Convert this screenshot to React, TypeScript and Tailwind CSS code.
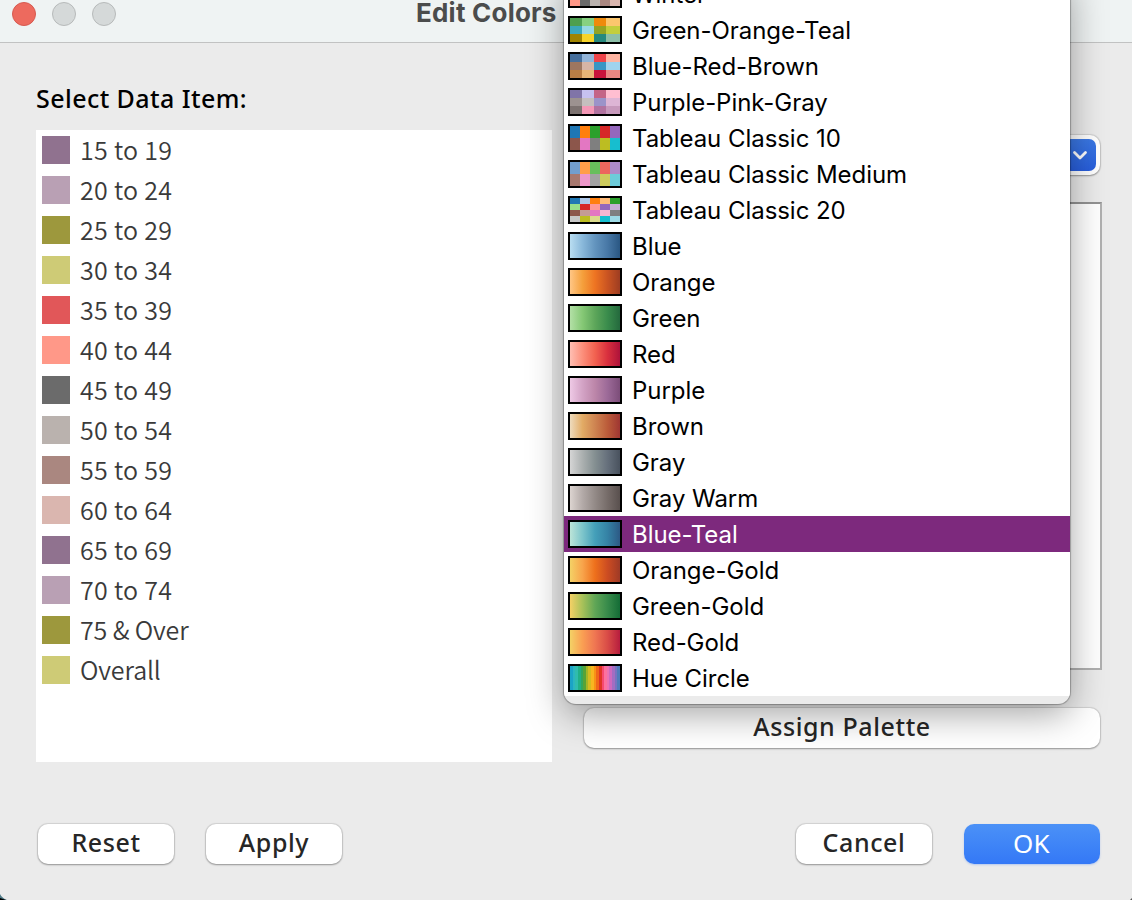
import React from "react";

type Entry = { label: string; cells?: string[]; cols?: string; ramp?: string[]; selected?: boolean };

const FIVE = "grid-cols-[10px_10px_10px_10px_10px]";
const FOUR = "grid-cols-[12px_12px_12px_14px]";

const WINTER = ["#90728f", "#b9a0b4", "#9d983d", "#cecb76", "#e15759", "#ff9888", "#6b6b6b", "#bab2ae", "#aa8780", "#dab6af"];

const ENTRIES: Entry[] = [
  { label: "Winter", cols: FIVE, cells: WINTER },
  {
    label: "Green-Orange-Teal",
    cols: FOUR,
    cells: ["#4e9f50", "#87d180", "#ef8a0c", "#fcc66d", "#3ca8bc", "#98d9e4", "#94a323", "#c3ce3d", "#a08400", "#f7d42a", "#26897e", "#8dbfa8"],
  },
  {
    label: "Blue-Red-Brown",
    cols: FOUR,
    cells: ["#466f9d", "#91b3d7", "#ed444a", "#feb5a2", "#9d7660", "#d7b5a6", "#3896c4", "#a0d4ee", "#ba7e45", "#e8b577", "#c8133b", "#ea8783"],
  },
  {
    label: "Purple-Pink-Gray",
    cols: FOUR,
    cells: ["#8074a8", "#c6c1f0", "#c46487", "#ffbed1", "#9c9290", "#c5bfbe", "#9b93c9", "#ddb5d5", "#7c7270", "#f498b6", "#b173a0", "#c799bc"],
  },
  {
    label: "Tableau Classic 10",
    cols: FIVE,
    cells: ["#1f77b4", "#ff7f0e", "#2ca02c", "#d62728", "#9467bd", "#8c564b", "#e377c2", "#7f7f7f", "#bcbd22", "#17becf"],
  },
  {
    label: "Tableau Classic Medium",
    cols: FIVE,
    cells: ["#729ece", "#ff9e4a", "#67bf5c", "#ed665d", "#ad8bc9", "#a8786e", "#ed97ca", "#a2a2a2", "#cdcc5d", "#6dccda"],
  },
  {
    label: "Tableau Classic 20",
    cols: FIVE,
    cells: [
      "#1f77b4", "#aec7e8", "#ff7f0e", "#ffbb78", "#2ca02c", "#98df8a", "#d62728", "#ff9896", "#9467bd", "#c5b0d5",
      "#8c564b", "#c49c94", "#e377c2", "#f7b6d2", "#7f7f7f", "#c7c7c7", "#bcbd22", "#dbdb8d", "#17becf", "#9edae5",
    ],
  },
  { label: "Blue", ramp: ["#b9ddf1", "#89b8da", "#6394be", "#4878a6", "#2a5783"] },
  { label: "Orange", ramp: ["#ffc685", "#f5a03c", "#ee7422", "#ca5422", "#9e3d22"] },
  { label: "Green", ramp: ["#b3e0a6", "#85c875", "#5da65a", "#3a8c4c", "#24693d"] },
  { label: "Red", ramp: ["#ffbeb2", "#fc8f7b", "#f26250", "#d9303e", "#ae123a"] },
  { label: "Purple", ramp: ["#eec9e5", "#d3a3c5", "#bc86a9", "#9c6a98", "#7c4d79"] },
  { label: "Brown", ramp: ["#eedbbd", "#e2ab65", "#ce8451", "#bb5c3a", "#9f3632"] },
  { label: "Gray", ramp: ["#d5d5d5", "#abb0b0", "#848f91", "#66707c", "#49525e"] },
  { label: "Gray Warm", ramp: ["#dcd4d0", "#b3aaa8", "#938a87", "#766c69", "#59504e"] },
  { label: "Blue-Teal", selected: true, ramp: ["#bce4d8", "#7dc5cb", "#449fb9", "#3582a5", "#2c5985"] },
  { label: "Orange-Gold", ramp: ["#f4d166", "#f8a44b", "#ee701c", "#cc4c22", "#9e3a26"] },
  { label: "Green-Gold", ramp: ["#f4d166", "#a7c159", "#60a656", "#388b4b", "#146c36"] },
  { label: "Red-Gold", ramp: ["#f4d166", "#fa9f53", "#ef7652", "#d94c47", "#b71d3e"] },
];

const HUES = [
  "#1ba3c6", "#2cb5c0", "#30bcad", "#21b087", "#33a65c", "#57a337", "#a2b627", "#d5bb21", "#f8b620",
  "#f89217", "#f06719", "#e03426", "#f64971", "#fc719e", "#eb73b3", "#ce69be", "#a26dc2", "#7873c0", "#4f7cba",
];

const ITEMS = ["15 to 19", "20 to 24", "25 to 29", "30 to 34", "35 to 39", "40 to 44", "45 to 49", "50 to 54", "55 to 59", "60 to 64", "65 to 69", "70 to 74", "75 & Over", "Overall"];

function Swatch({ entry }: { entry: Entry }) {
  if (entry.cells) {
    return (
      <div className={`grid h-7 w-[54px] shrink-0 auto-rows-fr border-2 border-black ${entry.cols}`}>
        {entry.cells.map((c, i) => (
          <span key={i} style={{ backgroundColor: c }} />
        ))}
      </div>
    );
  }
  return (
    <div
      className="h-7 w-[54px] shrink-0 border-2 border-black bg-origin-content"
      style={{ backgroundImage: `linear-gradient(to right, ${entry.ramp!.join(", ")})` }}
    />
  );
}

function PaletteMenu() {
  return (
    <div className="absolute top-[-24px] left-[564px] w-[506px] overflow-hidden rounded-b-[12px] bg-[#ebebeb] pb-2 font-['Inter',sans-serif] text-[24px] tracking-[-0.05px] shadow-[0_0_1px_1px_rgba(0,0,0,0.27),0_10px_36px_rgba(0,0,0,0.36)]">
      {ENTRIES.map((e) => (
        <div key={e.label} className={`flex h-9 items-center gap-2.5 pl-1 ${e.selected ? "bg-[#7d297d] text-white" : "bg-white text-black"}`}>
          <Swatch entry={e} />
          <span className="pt-0.5 leading-9 whitespace-nowrap">{e.label}</span>
        </div>
      ))}
      <div className="flex h-9 items-center gap-2.5 bg-white pl-1 text-black">
        <div className="flex h-7 w-[54px] shrink-0 border-2 border-black">
          {HUES.map((c) => (
            <span key={c} className="flex-1" style={{ backgroundColor: c }} />
          ))}
        </div>
        <span className="pt-0.5 leading-9">Hue Circle</span>
      </div>
    </div>
  );
}

function PushButton({ label, className = "" }: { label: string; className?: string }) {
  return (
    <button
      className={`flex h-10 items-center justify-center rounded-[10px] bg-white pb-0.5 text-[25px] font-medium tracking-[0.6px] text-[#262626] shadow-[0_0_1px_1px_rgba(0,0,0,0.1),0_1px_2px_rgba(0,0,0,0.3)] ${className}`}
    >
      {label}
    </button>
  );
}

export default function App() {
  return (
    <div className="relative flex h-[900px] w-[1132px] flex-col overflow-hidden bg-[#ebebeb] font-['Noto_Sans',sans-serif]">
      <header className="flex h-[43px] shrink-0 border-b border-[#c1c2c2] bg-[#eff3f3] pl-3">
        <div className="flex gap-4 pt-0.5">
          <span className="size-6 rounded-full border border-[#d65a50] bg-[#ed6a5e]" />
          <span className="size-6 rounded-full border border-[#b7baba] bg-[#d5d9d9]" />
          <span className="size-6 rounded-full border border-[#b7baba] bg-[#d5d9d9]" />
        </div>
        <h1 className="ml-[300px] font-['Inter',sans-serif] text-[26px] leading-[26px] font-bold tracking-[0.22px] whitespace-nowrap text-[#4b4c4c]">Edit Colors</h1>
      </header>

      <main className="flex h-[719px] shrink-0 pl-9">
        <section className="w-[516px]">
          <h2 className="h-[87px] pt-[37px] text-[25px] leading-9 font-medium tracking-[0.43px] text-black">Select Data Item:</h2>
          <ul className="h-[632px] bg-white">
            {ITEMS.map((item, i) => (
              <li
                key={item}
                className={`flex h-10 items-center gap-2.5 pl-1.5 font-['Noto_Sans_CJK_JP',sans-serif] text-[25px] font-[350] text-[#3a3a3a] ${i < 12 ? "tracking-[0.3px]" : "tracking-[-0.12px]"}`}
              >
                <span className="size-7" style={{ backgroundColor: WINTER[i % 10] }} />
                <span className="pb-px leading-[39px]">{item}</span>
              </li>
            ))}
          </ul>
        </section>
        <section className="ml-8 flex w-[518px] flex-col pt-[92px]">
          <div className="flex h-10 w-[516px] justify-end rounded-[10px] bg-white p-1 shadow-[0_0_1px_1px_rgba(0,0,0,0.1),0_1px_2px_rgba(0,0,0,0.3)]">
            <div className="flex h-8 w-8 items-center justify-center rounded-[7px] bg-linear-to-b from-[#3b78e4] to-[#285edc]">
              <svg width="16" height="12" viewBox="0 0 16 12" fill="none" stroke="white" strokeWidth="2.8" strokeLinecap="round" strokeLinejoin="round">
                <path d="M2.5 3.5 8 9l5.5-5.5" />
              </svg>
            </div>
          </div>
          <div className="mt-[27px] h-[468px] border-2 border-[#b0b0b0] border-t-[#929292] bg-white" />
          <PushButton label="Assign Palette" className="mt-[38px] w-[516px] shrink-0" />
        </section>
      </main>

      <footer className="flex pt-[62px] pr-8 pl-[38px]">
        <PushButton label="Reset" className="w-[136px]" />
        <PushButton label="Apply" className="ml-8 w-[136px]" />
        <PushButton label="Cancel" className="ml-auto w-[136px]" />
        <button className="ml-8 flex h-10 w-[136px] items-center justify-center rounded-[10px] bg-linear-to-b from-[#4b91f7] to-[#3478f6] pr-px pb-[3px] text-[26px] leading-9 tracking-[0.3px] text-white shadow-[0_1px_2px_rgba(52,120,246,0.3)]">
          OK
        </button>
      </footer>

      <PaletteMenu />
      <svg className="absolute bottom-0 left-0" width="7" height="6" viewBox="0 0 7 6">
        <path d="M0 0Q2 4 7 6H0Z" fill="#4d7986" />
        <path d="M0 4 6 6H0Z" fill="#000" />
      </svg>
      <svg className="absolute right-0 bottom-0" width="2" height="2" viewBox="0 0 2 2">
        <path d="M2 0V2H0Z" fill="#555" />
      </svg>
    </div>
  );
}
